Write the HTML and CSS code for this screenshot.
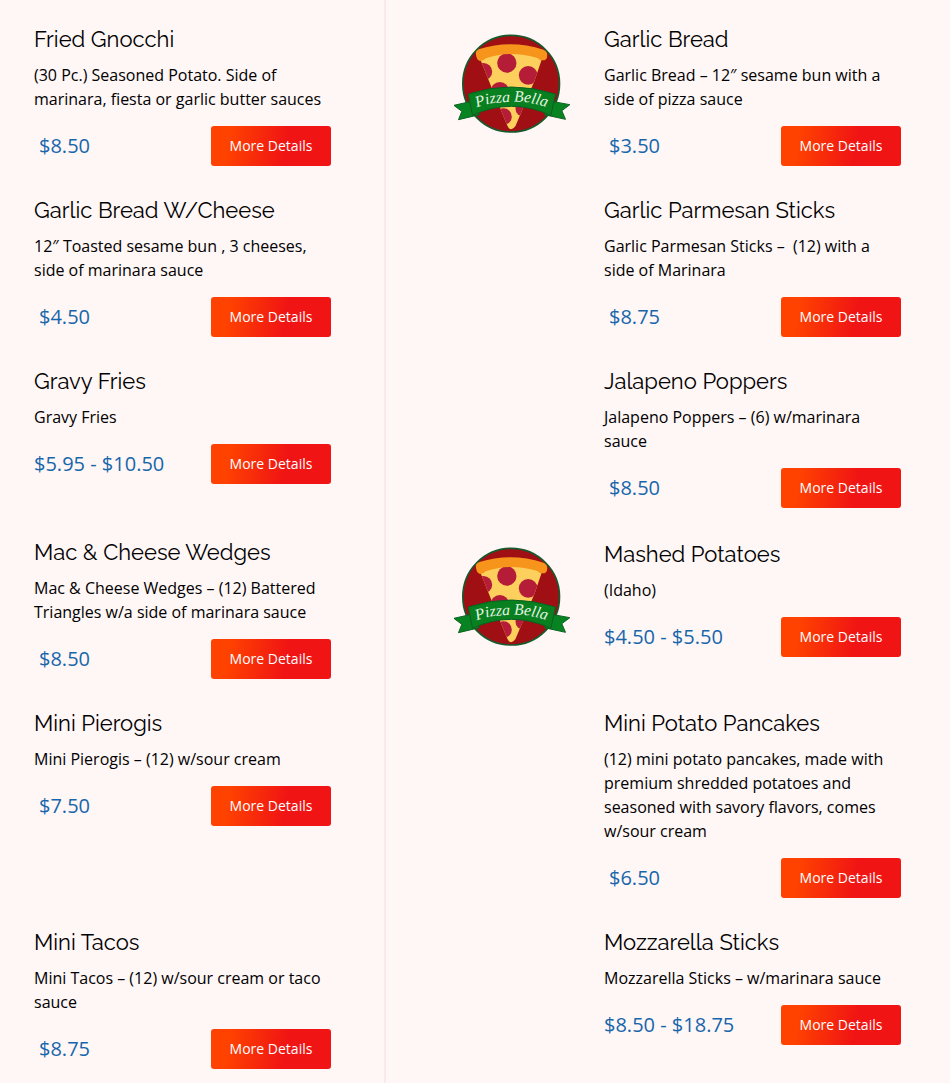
FILE: index.html
```html
<!DOCTYPE html>
<html lang="en">
<head>
    <meta charset="UTF-8">
    <meta name="viewport" content="width=device-width, initial-scale=1.0">
    <title>Pizza Bella - Appetizers</title>
    <link rel="stylesheet" href="styles.css">
</head>
<body>

<main class="menu">
    <article class="item">
        <div class="item-body">
            <h2>Fried Gnocchi</h2>
            <p>(30 Pc.) Seasoned Potato. Side of marinara, fiesta or garlic butter sauces</p>
            <div class="item-footer">
                <span class="price single">$8.50</span>
                <a href="#" class="details-btn">More Details</a>
            </div>
        </div>
    </article>

    <article class="item">
        <svg class="item-image" viewBox="42 15 350 363" role="img" aria-label="Pizza Bella">
            <defs>
                <clipPath id="sliceClip">
                    <path d="M118 112 Q212 78 307 112 L283 182 L226 318 Q212 338 202 318 L150 192 Z"/>
                </clipPath>
                <path id="ribbonLine" d="M103 265 C150 246 180 247 213 246 C250 242 285 250 326 264"/>
            </defs>
            <g id="logo">
                <circle cx="213" cy="191" r="145" fill="#9f0f13" stroke="#16592c" stroke-width="5"/>
                <path d="M118 112 Q212 78 307 112 L283 182 L226 318 Q212 338 202 318 L150 192 Z" fill="#fdcf5c"/>
                <g clip-path="url(#sliceClip)" fill="#b51c38">
                    <circle cx="200" cy="129" r="29"/>
                    <circle cx="264" cy="166" r="28"/>
                    <circle cx="130" cy="155" r="26"/>
                    <circle cx="179" cy="214" r="28"/>
                    <circle cx="190" cy="290" r="25"/>
                    <circle cx="250" cy="266" r="24"/>
                </g>
                <path d="M107 100 Q106 92 118 87 Q212 58 310 89 Q322 94 321 107 Q321 121 307 121 Q297 121 292 114 Q210 89 137 115 Q129 124 119 123 Q108 120 107 100 Z" fill="#f7941b"/>
                <path d="M90 245 L41 256 L65 274 L55 299 L118 284 Z" fill="#078322" stroke="#0c6423" stroke-width="3"/>
                <path d="M340 245 L389 254 L365 272 L376 298 L312 284 Z" fill="#078322" stroke="#0c6423" stroke-width="3"/>
                <path d="M84 222 Q213 180 346 222 L332 286 Q213 232 97 286 Z" fill="#08801f" stroke="#0c5f22" stroke-width="3"/>
                <text class="logo-text"><textPath href="#ribbonLine" startOffset="50%" text-anchor="middle">Pizza Bella</textPath></text>
            </g>
        </svg>
        <div class="item-body">
            <h2>Garlic Bread</h2>
            <p>Garlic Bread – 12″ sesame bun with a side of pizza sauce</p>
            <div class="item-footer">
                <span class="price single">$3.50</span>
                <a href="#" class="details-btn">More Details</a>
            </div>
        </div>
    </article>

    <article class="item">
        <div class="item-body">
            <h2>Garlic Bread W/Cheese</h2>
            <p>12″ Toasted sesame bun , 3 cheeses, side of marinara sauce</p>
            <div class="item-footer">
                <span class="price single">$4.50</span>
                <a href="#" class="details-btn">More Details</a>
            </div>
        </div>
    </article>

    <article class="item">
        <div class="item-body">
            <h2>Garlic Parmesan Sticks</h2>
            <p>Garlic Parmesan Sticks –&nbsp; (12) with a side of Marinara</p>
            <div class="item-footer">
                <span class="price single">$8.75</span>
                <a href="#" class="details-btn">More Details</a>
            </div>
        </div>
    </article>

    <article class="item">
        <div class="item-body">
            <h2>Gravy Fries</h2>
            <p>Gravy Fries</p>
            <div class="item-footer">
                <span class="price">$5.95 - $10.50</span>
                <a href="#" class="details-btn">More Details</a>
            </div>
        </div>
    </article>

    <article class="item">
        <div class="item-body">
            <h2>Jalapeno Poppers</h2>
            <p>Jalapeno Poppers – (6) w/marinara sauce</p>
            <div class="item-footer">
                <span class="price single">$8.50</span>
                <a href="#" class="details-btn">More Details</a>
            </div>
        </div>
    </article>

    <article class="item">
        <div class="item-body">
            <h2>Mac &amp; Cheese Wedges</h2>
            <p>Mac &amp; Cheese Wedges – (12) Battered Triangles w/a side of marinara sauce</p>
            <div class="item-footer">
                <span class="price single">$8.50</span>
                <a href="#" class="details-btn">More Details</a>
            </div>
        </div>
    </article>

    <article class="item">
        <svg class="item-image" viewBox="42 15 350 363" role="img" aria-label="Pizza Bella"><use href="#logo"/></svg>
        <div class="item-body">
            <h2>Mashed Potatoes</h2>
            <p>(Idaho)</p>
            <div class="item-footer">
                <span class="price">$4.50 - $5.50</span>
                <a href="#" class="details-btn">More Details</a>
            </div>
        </div>
    </article>

    <article class="item">
        <div class="item-body">
            <h2>Mini Pierogis</h2>
            <p>Mini Pierogis – (12) w/sour cream</p>
            <div class="item-footer">
                <span class="price single">$7.50</span>
                <a href="#" class="details-btn">More Details</a>
            </div>
        </div>
    </article>

    <article class="item">
        <div class="item-body">
            <h2>Mini Potato Pancakes</h2>
            <p>(12) mini potato pancakes, made with premium shredded potatoes and seasoned with savory flavors, comes w/sour cream</p>
            <div class="item-footer">
                <span class="price single">$6.50</span>
                <a href="#" class="details-btn">More Details</a>
            </div>
        </div>
    </article>

    <article class="item">
        <div class="item-body">
            <h2>Mini Tacos</h2>
            <p>Mini Tacos – (12) w/sour cream or taco sauce</p>
            <div class="item-footer">
                <span class="price single">$8.75</span>
                <a href="#" class="details-btn">More Details</a>
            </div>
        </div>
    </article>

    <article class="item">
        <div class="item-body">
            <h2>Mozzarella Sticks</h2>
            <p>Mozzarella Sticks – w/marinara sauce</p>
            <div class="item-footer">
                <span class="price">$8.50 - $18.75</span>
                <a href="#" class="details-btn">More Details</a>
            </div>
        </div>
    </article>
</main>

</body>
</html>
```
FILE: styles.css
```css
* {
    box-sizing: border-box;
}
body {
    margin: 0;
    font-family: 'Open Sans', sans-serif;
    font-size: 16px;
    line-height: 24px;
    color: #000;
    background-color: #fff6f6;
}
/* Two columns of menu items, rows share their height */
.menu {
    display: grid;
    grid-template-columns: 386fr 564fr;
}
.item {
    display: grid;
    align-content: start;
    align-items: center;
    padding: 25px 53px 5px 34px;
}
.item:nth-child(odd) {
    border-right: 2px solid #faebeb;
}
.item:nth-child(even) {
    grid-template-columns: 150px 1fr;
    padding-left: 68px;
    padding-right: 49px;
}
.item:nth-last-child(-n+2) {
    padding-bottom: 14px;
}
.item-image {
    width: 117px;
    height: 121px;
    align-self: start;
}
.item:nth-child(even) .item-body {
    grid-column: 2;
}
.logo-text {
    font-family: 'Liberation Serif', serif;
    font-style: italic;
    font-size: 47px;
    fill: #e9f5e6;
}
.item h2 {
    margin: 0 0 10px;
    font-family: 'Raleway', 'Lato', sans-serif;
    font-size: 22px;
    font-weight: 400;
    line-height: 28px;
}
.item p {
    margin: 0 0 15px;
}
/* Price and button */
.item-footer {
    display: flex;
    justify-content: space-between;
    align-items: center;
}
.price {
    font-size: 20px;
    color: #1766ab;
}
.price.single {
    padding-left: 5px;
}
.details-btn {
    width: 120px;
    font-size: 14px;
    line-height: 40px;
    text-align: center;
    text-decoration: none;
    color: #fff;
    background: linear-gradient(100deg, #ff4200 15%, #f01414 62%);
    border-radius: 3px;
}
.details-btn:hover {
    background: #f01414;
}
```
